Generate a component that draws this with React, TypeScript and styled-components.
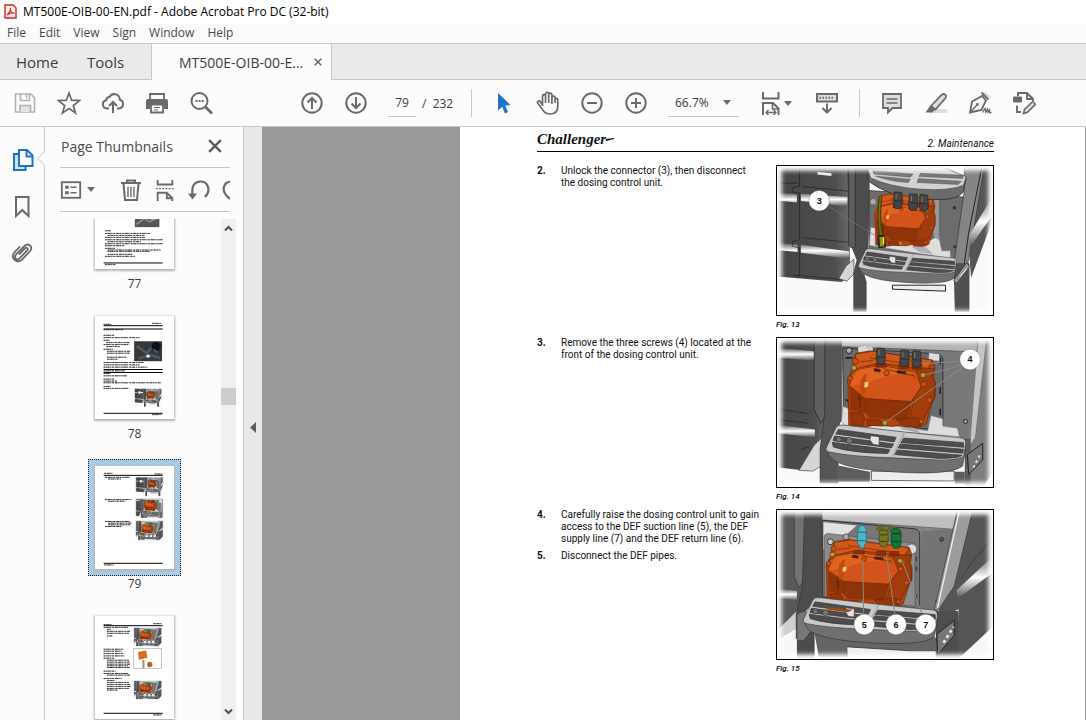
import React from "react";
import styled, { createGlobalStyle } from "styled-components";

const ui = `"Open Sans", "Noto Sans", sans-serif`;
const docFont = `Roboto, "Liberation Sans", Arial, sans-serif`;
const ink = "#6a6a6a";

const GlobalStyle = createGlobalStyle`
  * { box-sizing: border-box; }
  html, body, #root { height: 100%; }
  body { margin: 0; font-family: ${ui}; color: #3c3c3c; background: #fcfcfc; overflow: hidden; }
  button, input, select { font: inherit; color: inherit; border: 0; padding: 0; margin: 0; background: none; border-radius: 0; }
  svg { display: block; flex: none; }
`;

/* ---------- window frame ---------- */
const Window = styled.div`
  display: flex;
  flex-direction: column;
  height: 100%;
`;
const TitleBar = styled.header`
  display: flex;
  align-items: center;
  gap: 6px;
  height: 23px;
  padding-left: 4px;
  background: #fff;
  color: #000;
  font-size: 12px;
  line-height: 16px;
  white-space: nowrap;
`;
const MenuBar = styled.nav`
  display: flex;
  gap: 13px;
  height: 20px;
  padding-left: 7px;
  background: #fbfbfb;
  font-size: 12px;
  line-height: 20px;
`;
const MenuItem = styled.button`
  display: block;
  color: #4a4a4a;
`;
const TabBar = styled.div`
  display: flex;
  height: 37px;
  background: #eaeaea;
  border-top: 1px solid #c8c8c8;
  border-bottom: 1px solid #c8c8c8;
`;
const HomeTab = styled.button<{ $width: number }>`
  width: ${(p) => p.$width}px;
  text-align: left;
  font-size: 15px;
`;
const TabGroup = styled.div`
  display: flex;
  width: 152px;
  padding-left: 16px;
  border-right: 1px solid #c8c8c8;
`;
const FileTab = styled.div`
  display: flex;
  align-items: center;
  justify-content: space-between;
  width: 180px;
  height: 36px;
  padding: 0 9px 0 27px;
  background: #fcfcfc;
  border-right: 1px solid #c8c8c8;
  font-size: 14px;
`;
const PlainButton = styled.button`
  display: flex;
  align-items: center;
  justify-content: center;
`;

/* ---------- toolbar ---------- */
const Toolbar = styled.div`
  display: flex;
  align-items: center;
  height: 47px;
  padding-left: 3px;
  background: #fcfcfc;
  border-bottom: 1px solid #c8c8c8;
  font-size: 12px;
`;
const ToolGroup = styled.div<{ $before?: number }>`
  display: flex;
  align-items: center;
  margin-left: ${(p) => p.$before ?? 0}px;
`;
const ToolButton = styled.button<{ $width?: number }>`
  display: flex;
  align-items: center;
  justify-content: center;
  gap: 1px;
  width: ${(p) => p.$width ?? 44}px;
  height: 46px;
`;
const Divider = styled.span<{ $gap: number }>`
  width: 1px;
  height: 28px;
  margin: 0 ${(p) => p.$gap}px;
  background: #c8c8c8;
`;
const PageInput = styled.input`
  width: 28px;
  height: 28px;
  margin: 0 6px 0 10px;
  border-bottom: 1px solid #c4c4c4;
  text-align: center;
`;
const PageCount = styled.span`
  width: 39px;
  white-space: pre;
`;
const ZoomField = styled.label`
  display: flex;
  align-items: center;
  width: 71px;
  height: 28px;
  margin-left: 10px;
  border-bottom: 1px solid #c4c4c4;
`;
const ZoomSelect = styled.select`
  appearance: none;
  width: 55px;
  padding-left: 7px;
`;

/* ---------- left rail and thumbnails ---------- */
const Body = styled.div`
  display: flex;
  flex: 1;
  min-height: 0;
`;
const Rail = styled.nav`
  position: relative;
  display: flex;
  flex-direction: column;
  width: 45px;
  padding-top: 10px;
  border-right: 1px solid #c8c8c8;
`;
const RailButton = styled.button`
  display: flex;
  align-items: center;
  justify-content: center;
  height: 46px;
`;
const Notch = styled.svg`
  position: absolute;
  right: -1px;
  top: 24px;
`;
const Panel = styled.aside`
  display: flex;
  flex-direction: column;
  width: 199px;
  background: #fcfcfc;
  border-right: 1px solid #c8c8c8;
`;
const PanelHead = styled.div`
  display: flex;
  align-items: center;
  justify-content: space-between;
  height: 41px;
  margin: 0 13px 0 15px;
  padding: 0 8px 2px 1px;
  border-bottom: 1px solid #c4c4c4;
`;
const PanelTitle = styled.h2`
  margin: 0;
  font-size: 14px;
  font-weight: 400;
  color: #4a4a4a;
  white-space: nowrap;
`;
const PanelTools = styled.div`
  display: flex;
  align-items: center;
  height: 44px;
  margin: 0 13px 7px 15px;
  border-bottom: 1px solid #c4c4c4;
  overflow: hidden;
`;
const PanelTool = styled.button<{ $width: number }>`
  display: flex;
  flex: none;
  align-items: center;
  justify-content: center;
  gap: 5px;
  width: ${(p) => p.$width}px;
`;
const ThumbArea = styled.div`
  display: flex;
  flex: 1;
  min-height: 0;
  padding: 0 7px 0 3px;
`;
const ThumbList = styled.div`
  flex: 1;
  overflow: hidden;
`;
const ThumbStack = styled.ol`
  display: flex;
  flex-direction: column;
  align-items: center;
  gap: 6px;
  margin: -60px 0 0;
  padding: 0;
  list-style: none;
`;
const ThumbItem = styled.li`
  display: flex;
  flex-direction: column;
  align-items: center;
  height: 144px;
  font-size: 12px;
  line-height: 16px;
`;
const ThumbFrame = styled.button<{ $selected?: boolean }>`
  flex: none;
  width: 93px;
  height: 117px;
  padding: 6px;
  border: 1px ${(p) => (p.$selected ? "dotted #222" : "solid transparent")};
  background: ${(p) => (p.$selected ? "#a9cbe6" : "none")};
`;
const ThumbPage = styled.svg`
  width: 79px;
  height: 103px;
  background: #fff;
  box-shadow: 0 1px 2px 1px #b4b4b4;
`;
const ScrollTrack = styled.div`
  display: flex;
  flex-direction: column;
  align-items: center;
  width: 15px;
  background: #f0f0f0;
`;
const ScrollArrow = styled.button`
  display: flex;
  align-items: center;
  justify-content: center;
  width: 15px;
  height: 17px;
`;
const ScrollThumb = styled.span`
  width: 15px;
  height: 17px;
  background: #cdcdcd;
`;
const ScrollSpace = styled.span<{ $grow: number }>`
  flex: ${(p) => p.$grow};
`;
const Gutter = styled.button`
  display: flex;
  align-items: center;
  justify-content: center;
  width: 18px;
  padding-top: 8px;
  background: #e8e8e8;
`;

/* ---------- document ---------- */
const Canvas = styled.main`
  display: flex;
  flex: 1;
  min-width: 0;
  padding: 0 1px 0 198px;
  background: #999;
`;
const Sheet = styled.article`
  flex: 1;
  padding: 0 91px 0 77px;
  background: #fff;
  color: #111;
  font-family: ${docFont};
  overflow: hidden;
`;
const SheetHead = styled.div`
  display: flex;
  justify-content: space-between;
  align-items: flex-end;
  height: 25px;
  margin-bottom: 13px;
  border-bottom: 1px solid #000;
  font-size: 10px;
  line-height: 14px;
  font-style: italic;
`;
const Brand = styled.div`
  display: flex;
  align-items: center;
  height: 23px;
  align-self: flex-start;
  font: italic bold 15px/20px "Liberation Serif", serif;
`;
const Section = styled.section`
  display: grid;
  grid-template-columns: minmax(0, 1fr) 218px;
  height: 172px;
`;
const Steps = styled.div`
  display: flex;
  flex-direction: column;
  gap: 5px;
  padding-right: 20px;
  font-size: 10px;
  line-height: 12px;
  white-space: nowrap;
`;
const Step = styled.div`
  display: grid;
  grid-template-columns: 24px 1fr;
`;
const StepNo = styled.b`
  font-weight: 700;
`;
const StepText = styled.p`
  margin: 0;
`;
const Figure = styled.figure`
  margin: 0;
`;
const Picture = styled.svg`
  width: 218px;
  height: 151px;
  border: 1px solid #000;
  background: #fff;
`;
const Caption = styled.figcaption`
  padding-top: 3px;
  font-size: 8px;
  line-height: 12px;
  font-style: italic;
  font-weight: 500;
  color: #000;
`;

/* ---------- icons ---------- */
const Icon = ({ children, size = 24, color = ink, w = 2 }: { children: React.ReactNode; size?: number; color?: string; w?: number }) => (
  <svg width={size} height={size} viewBox="0 0 24 24" fill="none" stroke={color} strokeWidth={w} aria-hidden="true">
    {children}
  </svg>
);
const Caret = () => (
  <svg width="8" height="5" viewBox="0 0 8 5" aria-hidden="true"><path d="M0 0h8L4 5z" fill={ink} /></svg>
);

const SaveIcon = () => (
  <Icon color="#b2b2b2" w={1.6}>
    <path d="M2.500 3H18l3.500 4V21h-19z" /><path d="M7.500 3v6.500h9V3" /><path d="M13.500 4v3.500" />
    <path d="M7 21v-6.500h10.500V21" fill="#e4e4e4" />
  </Icon>
);
const StarIcon = () => (
  <Icon w={1.7}><path d="M12 2l2.600 7.200 7.900.4-6.200 5 2.200 7.400L12 17.600 5.500 22l2.200-7.400-6.200-5 7.900-.4z" /></Icon>
);
const CloudIcon = () => (
  <Icon>
    <path d="M8 17.500H6a4.200 4.200 0 0 1-.8-8.300A3.600 3.600 0 0 1 8.500 6a5.500 5.500 0 0 1 10.300 2.700 4.500 4.500 0 0 1-.8 8.800h-2" />
    <path d="M12 22V11.500M8 15l4-4 4 4" />
  </Icon>
);
const PrintIcon = () => (
  <Icon w={1.8}>
    <path d="M5 9V3h14v6" />
    <path d="M3 8h18a2 2 0 0 1 2 2v8h-4v-4H5v4H1v-8a2 2 0 0 1 2-2z" fill={ink} stroke="none" />
    <path d="M6 13.500h12v8H6z" fill="#fff" /><path d="M9 16.500h6M9 19h4" strokeWidth="1.200" />
  </Icon>
);
const SearchIcon = () => (
  <Icon>
    <circle cx="10.500" cy="10" r="8" /><path d="M16.500 16l6.500 6.500" strokeWidth="2.800" />
    <path d="M6.500 10h2M9.600 10h2M12.700 10h2" />
  </Icon>
);
const RoundIcon = ({ d }: { d: string }) => (
  <Icon><circle cx="12" cy="12" r="9.700" /><path d={d} /></Icon>
);
const CursorIcon = () => (
  <Icon><path d="M6 2v17.500l4.200-3.800 2.800 6.700 3-1.300-2.800-6.500 5.300-.5z" fill="#1f72c4" stroke="none" /></Icon>
);
const HandIcon = () => (
  <Icon w={1.700}>
    <path d="M6.500 15V5.200a1.500 1.500 0 0 1 3 0V12M9.500 12V3a1.600 1.600 0 0 1 3.200 0v9M12.700 12V3.800a1.600 1.600 0 0 1 3.200 0V12M15.900 13V6.700a1.600 1.600 0 0 1 3.200 0V12M19.100 12V8.800a1.300 1.300 0 0 1 2.700 0V15c0 5-3 8-7.800 8-4.300 0-6-1.700-8-5.200L1.800 12.200c-1-1.700 1-3 2.400-1.600l2.300 2.900" />
  </Icon>
);
const FitIcon = () => (
  <Icon>
    <path d="M4 1v6.500h15.500V1M4 24V12h10l5.500 5.500V24" /><path d="M13.500 12v6h6" strokeWidth="1.600" />
    <path d="M7 21.500h10M9.500 19L7 21.500 9.500 24M14.500 19l2.500 2.500-2.500 2.500" strokeWidth="1.400" />
  </Icon>
);
const ReadIcon = () => (
  <Icon>
    <rect x="2" y="3" width="20" height="7.500" fill="#ddd" /><path d="M4.500 6.800h15" strokeDasharray="1.500 1.500" />
    <path d="M12 12.500V21M7.500 17l4.500 4.500 4.500-4.500" />
  </Icon>
);
const CommentIcon = () => (
  <Icon w={1.800}>
    <path d="M3 3h18v14h-8.500L8 21.500V17H3z" fill="#ddd" /><path d="M6.500 8h11M6.500 12h11" strokeWidth="1.400" />
  </Icon>
);
const MarkIcon = () => (
  <Icon w={1.800}>
    <path d="M8 18h15v4H6z" fill="#ddd" stroke="none" />
    <path d="M7 15L18 3.500c2.500-1.500 5 .8 3.700 3.300L11.500 18.500z" fill="#ddd" />
    <path d="M6 15l5 4-3 2.500H1.500z" fill={ink} stroke="none" />
  </Icon>
);
const SignIcon = () => (
  <Icon w={1.800}>
    <path d="M14 1.500l6 6 3-2-5.500-4.500z" fill="#ddd" stroke="none" />
    <path d="M13.500 1.500l7 7M2 21.500L4 10.500 14 5l4 4.500-4.500 9.500z" fill="#f4f4f4" />
    <path d="M2.500 21l6-6.500" strokeWidth="1.400" /><circle cx="9.300" cy="13.500" r="1.400" fill={ink} stroke="none" />
    <path d="M14.500 21.500l2.500-4 .8 3.500 1.700-3 .5 3 1.500-2v2.500h2" strokeWidth="1.400" />
  </Icon>
);
const EditIcon = () => (
  <Icon w={1.900}>
    <path d="M6 5V2h9l6 6v2M15 2v6h6M5 14.500V21h4" />
    <rect x="1" y="5.500" width="9" height="6" rx="1" fill={ink} stroke="none" />
    <path d="M11.500 22.500l1-4 8.200-8 2.800 2.800-8 8z" fill="#ddd" strokeWidth="1.600" />
  </Icon>
);
const PagesIcon = () => (
  <Icon color="#1f72c4">
    <path d="M9 6H4v16h11.500v-3" fill="#cfe2f4" /><path d="M9 2h8l5.500 5.500V18H9z" fill="#fff" /><path d="M16.500 2v6.500h6" />
  </Icon>
);
const BookmarkIcon = () => (<Icon><path d="M6 3h12.500v19L12.200 16 6 22z" /></Icon>);
const ClipIcon = () => (
  <Icon w={1.800}>
    <path d="M9 14.500l6-6.200c1.600-1.600 3.700.5 2.200 2.100l-7.600 8c-2.600 2.600-6.200-.9-3.700-3.700L14.500 6c3.800-3.700 9 .8 5.600 5l-8 8.700C7.500 24.200 0 18.300 4.200 12.700L10 6.500" />
  </Icon>
);
const ListIcon = () => (
  <Icon size={22}>
    <rect x="2" y="3.500" width="20" height="17" />
    <path d="M5.500 9h4M5.500 15h4" strokeWidth="3.200" /><path d="M11.500 9h6.500M11.500 15h6.500" strokeWidth="1.800" />
  </Icon>
);
const TrashIcon = () => (
  <Icon>
    <path d="M2 5h20M8 5V2.500h8V5M4.500 5.500L6 22h12l1.500-16.500" fill="none" /><path d="M9 9v10M12 9v10M15 9v10" strokeWidth="1.400" />
  </Icon>
);
const SplitIcon = () => (
  <Icon size={22}>
    <path d="M4 1v5h16V1M4 24v-9h10l6 6v3M14 15v6h6" /><path d="M2 10.500h20" strokeDasharray="2 1.500" strokeWidth="1.500" />
  </Icon>
);
const RotateIcon = () => (
  <Icon w={2.200}>
    <path d="M5.500 17C4.500 8 7 4 13 3.500c8-.3 11.500 9 5 15.500" /><path d="M1 15.500l9 0-4.500 6z" fill={ink} stroke="none" />
  </Icon>
);
const CloseIcon = ({ size = 12 }: { size?: number }) => (
  <svg width={size} height={size} viewBox="0 0 12 12" aria-hidden="true"><path d="M1 1l10 10M11 1L1 11" stroke="#5c5c5c" strokeWidth="2" /></svg>
);

/* ---------- technical drawings ---------- */
const Unit = ({ transform }: { transform?: string }) => (
  <g transform={transform} stroke="#5e260a" strokeWidth="2" strokeLinejoin="round">
    <path d="M258 62l42-7 85 12 104 16 7 22-4 30 5 15v40l-10 25-12 40-5 20-14 8-60-6-25 6-60-4-20 6-55-6-2-120-2-14 12-28z" fill="#b5430d" />
    <path d="M258 64l50-8 180 27-16 34-60-16-90-8-74 18z" fill="#d2581a" />
    <path d="M440 105l54 4-8 26 9 15v45l-25 48-16 37-40-4 16-58z" fill="#a23c0a" />
    <path d="M262 113l70-14 108 22 15 42-30 45-138-9-48-38 5-36z" fill="#d2541a" />
    <path d="M262 113l70-14 108 22-90 10-60 20-50 10z" fill="#de6420" stroke="none" />
    <path d="M239 162l48 38 138 9-14 54-112-5-12-18-47-5z" fill="#8f3309" stroke="none" />
    <path d="M287 200l138 9 30-46M287 200v40M425 209l-14 54" fill="none" stroke="#7c2c08" />
    <path d="M272 142l12-16 6-4-2 60-16 12z" fill="#c04a12" stroke="none" />
    <path d="M284 150l12-2-2 15-11 3z" fill="#ffc878" stroke="none" />
    <path d="M242 242l34-2 8 20-6 22-34-2zM290 262l40 2 12 18-48-2zM380 262l60-6 20 10-16 20-40-2z" fill="#983508" />
    <path d="M268 185l2 40M262 200h12" strokeWidth="4" />
    <path d="M300 76l150 24M270 88l40-4M340 108l90 22" fill="none" />
    <g fill="#c85114"><circle cx="240" cy="137" r="7" /><circle cx="350" cy="122" r="8" /><circle cx="462" cy="156" r="8" /><circle cx="480" cy="203" r="8" /><circle cx="256" cy="86" r="9" /><circle cx="455" cy="268" r="7" /></g>
    <path d="M313 108l18 3v8l-18-3zM382 114l26 3v8l-26-3zM428 124l10 14" fill="#352015" />
    <path d="M318 92h32v12h-32zM388 94h28v14h-28zM428 96h28v14h-28z" fill="#8a300a" />
    <g fill="#a4a637"><circle cx="252" cy="106" r="8" /><circle cx="460" cy="128" r="8" /><circle cx="345" cy="272" r="8" /></g>
  </g>
);
const Plug = ({ x, y, fill = "#454545" }: { x: number; y: number; fill?: string }) => (
  <g stroke="#222" strokeWidth="2"><path d={`M${x} ${y}l22 2 3 30-5 18h-18l-6-16z`} fill={fill} /><path d={`M${x - 1} ${y + 27}l24 2`} /><path d={`M${x + 5} ${y + 6}v16`} stroke="#999" /></g>
);
const FootStep = ({ transform }: { transform?: string }) => (
  <g transform={transform} stroke="#333" strokeWidth="2" strokeLinejoin="round">
    <path d="M167 345l10 26q20 34 150 46 210 18 252-14l10-50-200 10z" fill="#707070" />
    <path d="M168 348l30-62q5-9 22-7l185 21 172 18q15 3 11 24l-5 30q-8 12-70 13l-145-7q-130-4-192-18-12-4-8-12z" fill="#c9c9c9" />
    <path d="M205 292l174 24-6 14-176-24zM193 312l178 24-6 12-176-22zM186 331l174 22-6 12q-110-2-164-20z" fill="#4d4d4d" />
    <path d="M402 318l180 14 1 14-190-14zM392 336l190 16-2 12-196-16zM382 354l196 16q-10 10-70 10l-134-12z" fill="#4d4d4d" />
    <path d="M302 311l26 3v26l-18-2-10-14z" fill="#e3e3e3" />
    <circle cx="238" cy="326" r="9" fill="#777" /><circle cx="206" cy="322" r="8" fill="#777" />
    <path d="M404 302l-36 72" stroke="#aaa" strokeWidth="5" />
  </g>
);
const Callout = ({ x, y, n }: { x: number; y: number; n: number }) => (
  <>
    <circle cx={x} cy={y} r="31" fill="#fff" stroke="#555" strokeWidth="1" />
    <text x={x} y={y + 9} textAnchor="middle" fontFamily="Liberation Sans, sans-serif" fontWeight="700" fontSize="27" fill="#111">{n}</text>
  </>
);
const Fade = ({ y }: { y: number }) => (
  <>
    <defs><filter id="fade" x="-10%" y="-10%" width="120%" height="120%"><feGaussianBlur stdDeviation="7" /></filter></defs>
    <rect x="17" y={y - 3} width="657" height="456" fill="none" stroke="#fff" strokeWidth="34" filter="url(#fade)" />
  </>
);
type SceneProps = { x?: number; y?: number; width?: number; height?: number };

const Defs = () => (
  <defs>
    <linearGradient id="shine" x1="0" y1="0" x2="0" y2="1"><stop offset="0" stopColor="#555" /><stop offset=".5" stopColor="#fff" /><stop offset="1" stopColor="#555" /></linearGradient>
    <linearGradient id="door" x1="0" y1="0" x2="1" y2="0"><stop offset="0" stopColor="#444" /><stop offset=".8" stopColor="#4e4e4e" /><stop offset="1" stopColor="#6a6a6a" /></linearGradient>
  </defs>
);

const SceneA = () => (
  <>
    <Defs />
    <rect x="20" y="106" width="651" height="450" fill="#fafafa" />
    <path d="M20 106h220v330l-25 20-195-16z" fill="url(#door)" />
    <path d="M20 186l60 6v24l-60-6zM92 190l140 10v28l-140-16z" fill="url(#shine)" />
    <path d="M20 338l62 6v22l-62-6zM92 344l146 20v22l-146-18z" fill="url(#shine)" />
    <path d="M88 106v60l-22 6v12l22 4v140l-22 6v14l22 6v84M20 158h64M96 168l140 14M96 322l136 14M70 436l140 12" stroke="#1e1e1e" strokeWidth="2" fill="none" />
    <path d="M142 124l42 4v8l-42-4z" fill="#eee" />
    <path d="M206 446l22-38 24-20v44l-22 22z" fill="#d5d5d5" stroke="#333" strokeWidth="2" />
    <path d="M230 106h70l-4 250-24 40 18 60v90h-40V430l10-40-20-50z" fill="#4c4c4c" />
    <path d="M256 106v240q-6 14-20 0V106" fill="#5c5c5c" stroke="#222" strokeWidth="2" />
    <path d="M298 180l285 20-4 190-70 6-210-40z" fill="#6c6c6c" stroke="#222" strokeWidth="2" />
    <path d="M302 290l180 40 25-14 10 46h26v24l-245-40z" fill="#dedede" stroke="#777" strokeWidth="2" />
    <path d="M426 350q30-20 66 24l-44-8z" fill="#b2b2b2" />
    <path d="M492 210v110l16 10V206" fill="#9a9a9a" />
    <circle cx="555" cy="232" r="5" fill="#333" /><circle cx="556" cy="350" r="5" fill="#333" /><circle cx="310" cy="214" r="8" fill="#aaa" />
    <path d="M640 106h31v160l-66 178-10-130z" fill="#555" />
    <path d="M585 106h60l-50 296h-42l30-210z" fill="#858585" stroke="#333" strokeWidth="2" />
    <path d="M671 196l-72 120 2 36 70-100z" fill="url(#shine)" />
    <path d="M638 106l-40 200-14 98" stroke="#222" strokeWidth="3" fill="none" />
    <path d="M552 400h48v146h-44z" fill="#505050" /><path d="M592 398l8 12-38 50-10-8z" fill="#999" stroke="#333" strokeWidth="2" /><path d="M572 440l20-24" stroke="#fff" strokeWidth="3" />
    <path d="M292 112l4 40q60 48 170 54 100 8 116-24l8-40-60-30z" fill="#6b6b6b" stroke="#222" strokeWidth="2" />
    <path d="M294 116l8 26q60 28 150 34 90 6 130-12l8-26-70-28z" fill="#d2d2d2" stroke="#444" strokeWidth="2" />
    <path d="M308 120l122 10-8 10-110-10zM316 136l106 10-6 10q-60-4-100-20zM452 128l130 6-2 10-132-6zM446 144l130 8-10 10-124-6z" fill="#777" stroke="#333" />
    <path d="M368 466h160v18l-160-6z" fill="#eee" stroke="#222" strokeWidth="3" />
    <Unit transform="translate(154 152) scale(.69)" />
    <Plug x={374} y={184} /><Plug x={420} y={190} /><Plug x={452} y={192} />
    <path d="M332 196q-8 60 2 130" stroke="#3d3a08" strokeWidth="11" fill="none" /><path d="M332 196q-8 60 2 130" stroke="#7d6a1c" strokeWidth="5" fill="none" />
    <path d="M326 318h16l4 32-18 2z" fill="#8f9418" stroke="#222" strokeWidth="5" /><path d="M341 320v22" stroke="#e0e22a" strokeWidth="5" />
    <FootStep transform="translate(148 155) scale(.7 .72)" />
    <path d="M176 228l146 92" stroke="#777" strokeWidth="2" />
    <Callout x={147} y={211} n={3} />
    <Fade y={106} />
  </>
);

const SceneB = () => (
  <>
    <Defs />
    <rect x="20" y="16" width="651" height="450" fill="#f8f8f8" />
    <path d="M20 16h145v296l-50 106-95-12z" fill="url(#door)" />
    <path d="M20 46l112 10v28l-112-8z" fill="url(#shine)" /><path d="M20 278l114 14v24l-114-12z" fill="url(#shine)" />
    <path d="M20 230l92 14M20 262l96 12M90 354l26-10" stroke="#222" strokeWidth="2" fill="none" />
    <path d="M132 16v216l20 42 14-20V16z" fill="#5f5f5f" stroke="#222" strokeWidth="2" />
    <path d="M86 416l46-76 26-26v86l-30 18z" fill="#d6d6d6" stroke="#444" strokeWidth="2" />
    <path d="M164 16h50v246l-40 92 30 40v60h-54V350l10-76 4-30z" fill="#555" stroke="#2b2b2b" strokeWidth="2" />
    <path d="M214 16h440l-54 330-34-34-340-20z" fill="#787878" />
    <path d="M214 16h420l-10 42-410-16z" fill="#b4b4b4" stroke="#444" strokeWidth="2" />
    <path d="M218 46l284 18q18 2 18 20v210l-300-26z" fill="#6a6a6a" stroke="#333" strokeWidth="3" />
    <path d="M218 222l36 14v26l220 34 10-46 36 10v22l44 6 6 26-340-26-16-20z" fill="#ddd" stroke="#777" strokeWidth="2" />
    <path d="M390 290q30-24 64 14z" fill="#aaa" />
    <circle cx="237" cy="54" r="9" fill="#aaa" stroke="#222" strokeWidth="3" /><circle cx="300" cy="50" r="9" fill="#ccc" /><circle cx="588" cy="268" r="6" fill="#aaa" stroke="#222" strokeWidth="3" />
    <path d="M226 76h22M226 202l12 6M512 76v20M512 165v20M512 230v20" stroke="#222" strokeWidth="5" fill="none" />
    <path d="M592 340l30-280 10-44h39v404l-30 46h-50z" fill="#7e7e7e" /><path d="M626 16h26l-34 300-18 30z" fill="#c4c4c4" stroke="#666" strokeWidth="2" />
    <path d="M586 320h18v140h-18z" fill="#5c5c5c" /><path d="M640 334v50l-42 44-4-60z" fill="#777" stroke="#222" strokeWidth="3" />
    <path d="M612 408l22-44" stroke="#ddd" strokeWidth="6" strokeDasharray="8 9" />
    <path d="M304 418h250v30l-250-2z" fill="#ededed" stroke="#444" strokeWidth="3" />
    <path d="M200 400l100 20v30h-100zM556 420h30v36h-30z" fill="#5d5d5d" />
    <path d="M478 60l32 4v22l-34-2z" fill="#dcdcdc" stroke="#666" strokeWidth="2" /><path d="M264 44l26-4 4 18-28 4z" fill="#d9d9d9" />
    <Unit />
    <Plug x={322} y={46} /><Plug x={394} y={52} /><Plug x={430} y={54} />
    <FootStep />
    <path d="M575 86L460 94M578 98L464 128M578 106L345 272" stroke="#8a8a8a" strokeWidth="3" />
    <Callout x={602} y={81} n={4} />
    <Fade y={16} />
  </>
);

const SceneC = () => (
  <>
    <Defs />
    <rect x="20" y="25" width="651" height="450" fill="#f8f8f8" />
    <path d="M20 25h80v220l-10 85-70 60z" fill="#585858" /><path d="M72 25v200l14 34 16-20V25z" fill="#727272" stroke="#333" strokeWidth="2" />
    <path d="M20 262l60 8v28l-60-8z" fill="url(#shine)" /><path d="M20 390l60-60v52l-56 34z" fill="#cfcfcf" />
    <path d="M104 25h54v265l-44 30-22 30 40 40v85H78V340l18-80z" fill="#4c4c4c" stroke="#333" strokeWidth="2" />
    <path d="M156 32h410l-66 320-342-62z" fill="#858585" />
    <path d="M156 32l300-7h110l-14 58-396-28z" fill="#c0c0c0" stroke="#555" strokeWidth="2" />
    <path d="M156 56l280 26q14 2 14 20v222l-292-36z" fill="#767676" stroke="#333" strokeWidth="3" />
    <path d="M160 62l100 10-36 32-64 40z" fill="#e1e1e1" /><path d="M162 108q0-12 12-12l262 30v190l-272-30z" fill="#8c8c8c" stroke="#555" strokeWidth="2" />
    <circle cx="181" cy="121" r="9" fill="#ccc" stroke="#333" strokeWidth="3" /><circle cx="228" cy="106" r="9" fill="#aaa" stroke="#333" strokeWidth="2" /><circle cx="426" cy="143" r="15" fill="#ddd" stroke="#555" strokeWidth="2" />
    <path d="M440 166v14M440 196v14M440 280v16" stroke="#444" strokeWidth="5" />
    <path d="M452 330l3-240 97-8 14-57-66 317z" fill="#747474" />
    <circle cx="516" cy="114" r="6" fill="#555" stroke="#222" strokeWidth="2" /><circle cx="503" cy="300" r="6" fill="#444" />
    <path d="M562 25h109v350l-60 100h-50l6-150-64 30z" fill="#555" />
    <path d="M671 164v50l-106 78-4-24z" fill="url(#shine)" /><path d="M576 232l28-44 67-80" stroke="#333" strokeWidth="2" fill="none" />
    <path d="M564 25h46l-56 230-48 72h-12z" fill="#9c9c9c" stroke="#333" strokeWidth="2" /><path d="M570 25L504 320" stroke="#eee" strokeWidth="4" />
    <path d="M80 340l20-10 40 30v10l-40 50h-20z" fill="#777" stroke="#333" strokeWidth="2" /><path d="M130 380l14 5 356 25v60H146z" fill="#656565" />
    <path d="M230 438l190 12h80v24H232z" fill="#eee" stroke="#444" strokeWidth="3" /><path d="M20 420l60-6v61H20zM566 475l105-98v98z" fill="#f7f7f7" />
    <path d="M498 330h68v145h-66z" fill="#4e4e4e" /><path d="M502 400l52-42v46l-50 58z" fill="#777" stroke="#222" strokeWidth="3" /><path d="M522 426l30-48" stroke="#eee" strokeWidth="8" strokeDasharray="9 9" />
    <Unit transform="translate(-60 66) scale(.98 .88)" />
    <path d="M322 76l30 20M356 76l20 12" stroke="#65681e" strokeWidth="18" />
    <path d="M264 86l6-14h14l5 14v38l-6 8v8h-14v-8l-7-8z" fill="#4cb8c4" stroke="#176a70" strokeWidth="2" /><path d="M264 92h25M263 118h25" stroke="#176a70" strokeWidth="3" />
    <path d="M328 92l4-6h20l3 8v30l-6 12h-14l-7-10z" fill="#787622" stroke="#3b3c10" strokeWidth="2" /><path d="M330 100h24M330 120h22" stroke="#3b3c10" strokeWidth="3" />
    <path d="M364 88l6-6h18l6 8v38l-6 12h-16l-8-12z" fill="#127438" stroke="#093d1a" strokeWidth="2" /><path d="M366 96h26M366 120h24" stroke="#093d1a" strokeWidth="3" />
    <FootStep transform="translate(-62 22) scale(.96)" />
    <path d="M168 318l80 8-14 8-60-8z" fill="#9d4818" />
    <path d="M279 176l2 160M350 160l25 180M396 176l60 160" stroke="#888" strokeWidth="3" />
    <Callout x={283} y={371} n={5} /><Callout x={379} y={371} n={6} /><Callout x={468} y={371} n={7} />
    <Fade y={25} />
  </>
);
const MiniScene = ({ kind, ...box }: SceneProps & { kind: "a" | "b" | "c" }) => (
  <svg {...box} viewBox={{ a: "20 106 651 450", b: "20 16 651 450", c: "20 25 651 450" }[kind]} preserveAspectRatio="none">
    {kind === "a" ? <SceneA /> : kind === "b" ? <SceneB /> : <SceneC />}
  </svg>
);

/* Miniature text: each entry is x, y, length */
const Lines = ({ rows, h = 2 }: { rows: number[][]; h?: number }) => (
  <>
    {rows.map(([x, y, w], i) => (
      <g key={i}>
        <path d={`M${x} ${y}h${w}`} stroke="#999" strokeWidth={h + 1} strokeDasharray="11 2 7 1" />
        <path d={`M${x} ${y}h${w}`} stroke="#000" strokeWidth={h} strokeDasharray="5 3 9 2 3 4" />
      </g>
    ))}
  </>
);
const Rules = ({ ys }: { ys: number[] }) => <>{ys.map((y) => <path key={y} d={`M26 ${y}h178`} stroke="#000" strokeWidth="3" />)}</>;

const Thumb77 = () => (
  <>
    <Rules ys={[28, 292]} />
    <g><rect x="120" y="120" width="74" height="64" fill="#555" /><path d="M124 176l24-18 16 10 28-12M130 150l50 12" stroke="#999" strokeWidth="4" fill="none" /></g>
    <Lines rows={[[30, 195, 18], [30, 203, 136], [38, 209, 112], [30, 215, 120], [30, 222, 174], [38, 228, 100], [30, 234, 174], [30, 240, 60], [30, 248, 30], [38, 253, 160], [38, 257, 130], [38, 266, 76], [30, 272, 90], [30, 297, 32]]} />
  </>
);
const Thumb78 = () => (
  <>
    <Lines rows={[[26, 25, 24], [172, 22, 28], [26, 41, 60], [26, 58, 34], [26, 65, 108], [26, 73, 18], [34, 80, 70], [26, 86, 78], [34, 92, 40], [26, 100, 28], [36, 106, 70], [36, 112, 68], [36, 124, 60], [36, 130, 34], [26, 140, 120], [26, 147, 108], [26, 154, 132], [26, 165, 64], [26, 173, 20], [26, 180, 70], [26, 190, 34], [26, 196, 40], [26, 201, 172], [26, 212, 20], [26, 218, 78], [172, 297, 28]]} />
    <Rules ys={[29, 39, 161, 170, 293]} />
    <rect x="118" y="76" width="84" height="60" fill="#34383b" /><path d="M126 90l30 22 24-28M130 128l36-10 30 8" stroke="#50565c" strokeWidth="8" fill="none" /><circle cx="184" cy="92" r="14" fill="#111" /><path d="M176 100l12 10" stroke="#397bb0" strokeWidth="4" /><circle cx="160" cy="121" r="5" fill="#eee" />
    <MiniScene kind="a" x={118} y={217} width={84} height={58} />
  </>
);
const Thumb79 = () => (
  <>
    <Lines rows={[[28, 22, 26], [180, 24, 24], [30, 34, 74], [40, 39, 38], [30, 101, 80], [40, 106, 52], [30, 167, 76], [40, 172, 70], [40, 177, 66], [30, 182, 50], [28, 298, 28]]} />
    <Rules ys={[28, 293]} />
    <MiniScene kind="a" x={122} y={32} width={84} height={60} />
    <MiniScene kind="b" x={122} y={98} width={84} height={60} />
    <MiniScene kind="c" x={122} y={164} width={84} height={60} />
  </>
);
const Thumb80 = () => (
  <>
    <Lines rows={[[26, 26, 26], [176, 23, 26], [26, 34, 76], [36, 40, 12], [36, 46, 70], [36, 52, 66], [36, 60, 16], [26, 100, 60], [26, 106, 54], [26, 113, 60], [26, 120, 62], [26, 127, 34], [36, 133, 66], [36, 139, 68], [36, 145, 70], [36, 150, 64], [36, 155, 68], [26, 166, 36], [26, 173, 74], [36, 178, 70], [26, 188, 54], [36, 194, 24], [36, 200, 66], [36, 206, 70], [36, 212, 72], [36, 218, 66], [36, 223, 34], [176, 298, 26]]} />
    <Rules ys={[29, 293]} />
    <MiniScene kind="c" x={116} y={34} width={86} height={58} />
    <rect x="117" y="98" width="84" height="60" fill="#fff" stroke="#555" strokeWidth="1" /><path d="M130 108l24-4 4 22-26 6z" fill="#df681c" /><path d="M146 132v24" stroke="#8a9a66" strokeWidth="6" /><circle cx="165" cy="146" r="8" fill="#bd641e" />
    <MiniScene kind="c" x={116} y={194} width={86} height={58} />
  </>
);

/* The last page has scrolled its number out of the list */
const thumbs = [
  { no: 77, label: "77", view: <Thumb77 /> },
  { no: 78, label: "78", view: <Thumb78 /> },
  { no: 79, label: "79", view: <Thumb79 /> },
  { no: 80, label: "", view: <Thumb80 /> },
];

const sections = [
  { caption: "Fig. 13", viewBox: "20 106 651 450", scene: <SceneA />, steps: [{ no: "2.", lines: ["Unlock the connector (3), then disconnect", "the dosing control unit."] }] },
  { caption: "Fig. 14", viewBox: "20 16 651 450", scene: <SceneB />, steps: [{ no: "3.", lines: ["Remove the three screws (4) located at the", "front of the dosing control unit."] }] },
  {
    caption: "Fig. 15", viewBox: "20 25 651 450", scene: <SceneC />,
    steps: [
      { no: "4.", lines: ["Carefully raise the dosing control unit to gain", "access to the DEF suction line (5), the DEF", "supply line (7) and the DEF return line (6)."] },
      { no: "5.", lines: ["Disconnect the DEF pipes."] },
    ],
  },
];

export default function App() {
  return (
    <Window>
      <GlobalStyle />
      <TitleBar>
        <svg width="13" height="15" viewBox="0 0 13 15" aria-hidden="true">
          <path d="M1 1h8l3 3v10H1z" fill="#fff0ee" stroke="#c62a22" strokeWidth="1.400" />
          <path d="M3 11c2.500-2 3.500-4.500 3.300-7C5.800 7 7.500 9 10.500 9.300 7.500 8.500 5 9.500 3 11z" fill="none" stroke="#d22" strokeWidth="1.200" />
        </svg>
        MT500E-OIB-00-EN.pdf - Adobe Acrobat Pro DC (32-bit)
      </TitleBar>
      <MenuBar>
        {["File", "Edit", "View", "Sign", "Window", "Help"].map((m) => <MenuItem key={m}>{m}</MenuItem>)}
      </MenuBar>
      <TabBar>
        <TabGroup>
          <HomeTab $width={71}>Home</HomeTab>
          <HomeTab $width={60}>Tools</HomeTab>
        </TabGroup>
        <FileTab>
          MT500E-OIB-00-E...
          <PlainButton aria-label="Close tab"><CloseIcon size={8} /></PlainButton>
        </FileTab>
      </TabBar>
      <Toolbar>
        <ToolGroup>
          <ToolButton aria-label="Save"><SaveIcon /></ToolButton>
          <ToolButton aria-label="Star"><StarIcon /></ToolButton>
          <ToolButton aria-label="Upload"><CloudIcon /></ToolButton>
          <ToolButton aria-label="Print"><PrintIcon /></ToolButton>
          <ToolButton aria-label="Find"><SearchIcon /></ToolButton>
        </ToolGroup>
        <ToolGroup $before={67}>
          <ToolButton aria-label="Previous page"><RoundIcon d="M12 18V7M7.500 11.500L12 7l4.500 4.500" /></ToolButton>
          <ToolButton aria-label="Next page"><RoundIcon d="M12 6v11M7.500 12.500L12 17l4.500-4.500" /></ToolButton>
          <PageInput aria-label="Page number" defaultValue="79" />
          <PageCount>/  232</PageCount>
        </ToolGroup>
        <Divider $gap={10} />
        <ToolGroup>
          <ToolButton aria-label="Select"><CursorIcon /></ToolButton>
          <ToolButton aria-label="Pan"><HandIcon /></ToolButton>
          <ToolButton aria-label="Zoom out"><RoundIcon d="M7 12h10" /></ToolButton>
          <ToolButton aria-label="Zoom in"><RoundIcon d="M7 12h10M12 7v10" /></ToolButton>
          <ZoomField>
            <ZoomSelect aria-label="Zoom level" defaultValue="66.7%"><option>66.7%</option></ZoomSelect>
            <Caret />
          </ZoomField>
        </ToolGroup>
        <ToolGroup $before={10}>
          <ToolButton aria-label="Fit page" $width={52}><FitIcon /><Caret /></ToolButton>
        </ToolGroup>
        <ToolGroup $before={4}>
          <ToolButton aria-label="Read mode"><ReadIcon /></ToolButton>
        </ToolGroup>
        <Divider $gap={10} />
        <ToolGroup>
          <ToolButton aria-label="Comment"><CommentIcon /></ToolButton>
          <ToolButton aria-label="Highlight"><MarkIcon /></ToolButton>
          <ToolButton aria-label="Sign"><SignIcon /></ToolButton>
          <ToolButton aria-label="Edit"><EditIcon /></ToolButton>
        </ToolGroup>
      </Toolbar>
      <Body>
        <Rail>
          <RailButton aria-label="Page thumbnails"><PagesIcon /></RailButton>
          <RailButton aria-label="Bookmarks"><BookmarkIcon /></RailButton>
          <RailButton aria-label="Attachments"><ClipIcon /></RailButton>
          <Notch width="8" height="15" viewBox="0 0 8 15" aria-hidden="true"><path d="M8 0L1 7.500 8 15" fill="#fcfcfc" stroke="#c8c8c8" /></Notch>
        </Rail>
        <Panel>
          <PanelHead>
            <PanelTitle>Page Thumbnails</PanelTitle>
            <PlainButton aria-label="Close panel"><CloseIcon size={14} /></PlainButton>
          </PanelHead>
          <PanelTools>
            <PanelTool $width={34} aria-label="Options"><ListIcon /><Caret /></PanelTool>
            <Divider $gap={9} />
            <PanelTool $width={38} aria-label="Delete"><TrashIcon /></PanelTool>
            <PanelTool $width={30} aria-label="Extract"><SplitIcon /></PanelTool>
            <PanelTool $width={38} aria-label="Rotate left"><RotateIcon /></PanelTool>
            <PanelTool $width={30} aria-label="Rotate right"><Icon w={2.2}><path d="M9 21C-2 12 3 3 12 3.500" /></Icon></PanelTool>
          </PanelTools>
          <ThumbArea>
            <ThumbList>
              <ThumbStack>
                {thumbs.map((t) => (
                  <ThumbItem key={t.no}>
                    <ThumbFrame $selected={t.no === 79} aria-label={`Page ${t.no}`}>
                      <ThumbPage viewBox="0 0 238 310" aria-hidden="true">{t.view}</ThumbPage>
                    </ThumbFrame>
                    {t.label}
                  </ThumbItem>
                ))}
              </ThumbStack>
            </ThumbList>
            <ScrollTrack>
              <ScrollArrow aria-label="Scroll up"><svg width="9" height="6" viewBox="0 0 9 6"><path d="M1 5.500L4.500 2 8 5.500" fill="none" stroke="#505050" strokeWidth="2" /></svg></ScrollArrow>
              <ScrollSpace $grow={152} />
              <ScrollThumb />
              <ScrollSpace $grow={298} />
              <ScrollArrow aria-label="Scroll down"><svg width="9" height="6" viewBox="0 0 9 6"><path d="M1 .500L4.500 4 8 .500" fill="none" stroke="#505050" strokeWidth="2" /></svg></ScrollArrow>
            </ScrollTrack>
          </ThumbArea>
        </Panel>
        <Gutter aria-label="Collapse panel"><svg width="6" height="11" viewBox="0 0 6 11"><path d="M6 0v11L0 5.500z" fill="#5c5c5c" /></svg></Gutter>
        <Canvas>
          <Sheet>
            <SheetHead>
              <Brand>
                Challenger
                <svg width="8" height="4" viewBox="0 0 8 4" aria-hidden="true"><path d="M0 2l8-1v1L0 4z" fill="#111" /></svg>
              </Brand>
              2. Maintenance
            </SheetHead>
            {sections.map((s) => (
              <Section key={s.caption}>
                <Steps>
                  {s.steps.map((st) => (
                    <Step key={st.no}>
                      <StepNo>{st.no}</StepNo>
                      <StepText>{st.lines.map((l) => <React.Fragment key={l}>{l}<br /></React.Fragment>)}</StepText>
                    </Step>
                  ))}
                </Steps>
                <Figure>
                  <Picture viewBox={s.viewBox} preserveAspectRatio="none" role="img" aria-label={s.caption}>{s.scene}</Picture>
                  <Caption>{s.caption}</Caption>
                </Figure>
              </Section>
            ))}
          </Sheet>
        </Canvas>
      </Body>
    </Window>
  );
}
